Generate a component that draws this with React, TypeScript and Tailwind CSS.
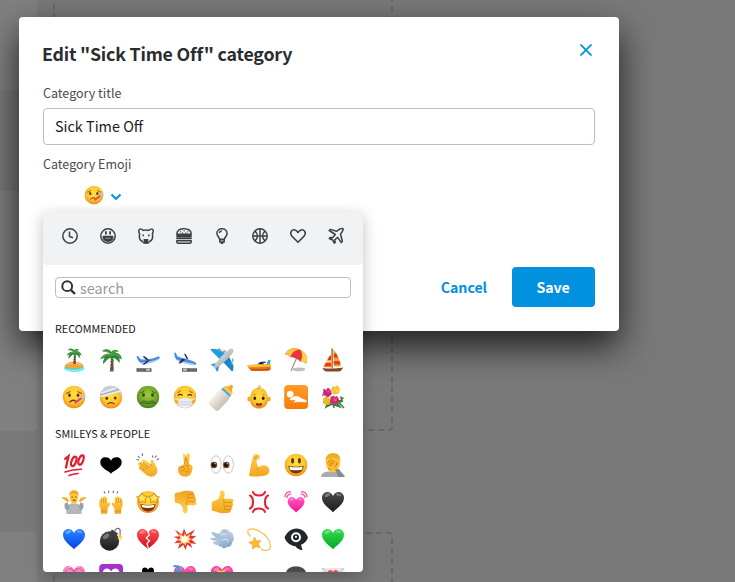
import React, { useState } from 'react';
import clsx from 'clsx';

const HEART = 'M12 22.3C9.8 19.4 1 14.6 1 7.8 1 4.5 3.4 2 6.4 2c2.4 0 4.400 1.300 5.600 3.900C13.200 3.300 15.200 2 17.600 2 20.600 2 23 4.500 23 7.800c0 6.800-8.800 11.600-11 14.500z';

// Shared gradients, referenced by every emoji below
const Gradients: React.FC = () => (
  <svg className="absolute w-0 h-0" aria-hidden="true">
    <defs>
      <radialGradient id="face" cx=".5" cy=".4" r=".6">
        <stop offset="0" stopColor="#ffe13f" />
        <stop offset=".65" stopColor="#fdc42e" />
        <stop offset="1" stopColor="#ee8b17" />
      </radialGradient>
      <radialGradient id="sick" cx=".5" cy=".4" r=".6">
        <stop offset="0" stopColor="#a3c83d" />
        <stop offset=".65" stopColor="#72a62b" />
        <stop offset="1" stopColor="#417c1d" />
      </radialGradient>
      <linearGradient id="skin" x2="0" y2="1">
        <stop offset="0" stopColor="#ffd34e" />
        <stop offset="1" stopColor="#f3a421" />
      </linearGradient>
      <linearGradient id="red" x2="0" y2="1">
        <stop offset="0" stopColor="#ff5353" />
        <stop offset="1" stopColor="#d20c1e" />
      </linearGradient>
      <linearGradient id="blue" x2="0" y2="1">
        <stop offset="0" stopColor="#2b86ff" />
        <stop offset="1" stopColor="#0643e8" />
      </linearGradient>
      <linearGradient id="green" x2="0" y2="1">
        <stop offset="0" stopColor="#35dc55" />
        <stop offset="1" stopColor="#04a51d" />
      </linearGradient>
      <linearGradient id="black" x2="0" y2="1">
        <stop offset="0" stopColor="#4b4b4e" />
        <stop offset="1" stopColor="#1b1b1d" />
      </linearGradient>
      <linearGradient id="pink" x2="0" y2="1">
        <stop offset="0" stopColor="#ff5dc0" />
        <stop offset="1" stopColor="#fb0d95" />
      </linearGradient>
      <linearGradient id="orange" x2="0" y2="1">
        <stop offset="0" stopColor="#ff9d2c" />
        <stop offset="1" stopColor="#f77a06" />
      </linearGradient>
      <linearGradient id="steel" x2="1" y2="1">
        <stop offset="0" stopColor="#f1f3f6" />
        <stop offset="1" stopColor="#8d949e" />
      </linearGradient>
      <linearGradient id="milk">
        <stop offset="0" stopColor="#f3efe8" />
        <stop offset="1" stopColor="#c9bfb1" />
      </linearGradient>
      <linearGradient id="cloud" x2="0" y2="1">
        <stop offset="0" stopColor="#c3d5e8" />
        <stop offset="1" stopColor="#8caac9" />
      </linearGradient>
    </defs>
  </svg>
);

const Heart: React.FC<{ fill: string }> = ({ fill }) => (
  <>
    <path d={HEART} fill={fill} />
    <ellipse cx="6.300" cy="5" rx="3" ry="1.600" fill="#fff" opacity=".3" transform="rotate(-25 6.300 5)" />
    <ellipse cx="17.500" cy="4.700" rx="3" ry="1.300" fill="#fff" opacity=".25" transform="rotate(15 17.500 4.700)" />
  </>
);

const Palm: React.FC = () => (
  <>
    <path d="M11.200 8.500c1.300 4.500 1 9.500-.600 15h4c.300-5.500-.100-10.500-1.700-15z" fill="#80553a" />
    <path d="M11.200 14h2.500M11 17h3M10.900 20h3.300" stroke="#51331f" strokeWidth=".8" />
    <path
      d="M12 6.500C9.500 5 4 5.500 1.200 11.500c2-1 3.500-1.500 4.500-1.200-1.500 1.400-2 3.600-1.300 6 1.500-2.500 3.600-5 7-6.800 1.200 1.200 2 3.600 2.300 6 1.600-1.500 1.300-3.700.300-5.800 2.700.600 5 2.700 6.300 5.300.800-1.800.500-3.400-.400-4.700 1.300.100 2.200.6 3 1.300C22.500 7 19.500 4.500 15.500 5.200 17 4 18.600 3.500 20 3.500 16.500 1 13.500 2 12.200 4 10.500 1 6 .200 3 3.200c3 0 6 .800 9 3.300z"
      fill="#2f8a35"
    />
    <path d="M4 3c3 0 6 1 8 3.500M3 9.500C6 7 9 6.500 12 7M21 8.500C18 6.500 15 6 12 7M18.500 3.500C15.500 3 14 4 12 6" stroke="#75b64c" strokeWidth=".8" fill="none" />
  </>
);

const Thumb: React.FC = () => (
  <>
    <path d="M1.700 13c0-1.500 1.700-2 4.300-2.800 2.300-.8 4-3.500 4.100-7C10.200 1 11 .500 12.200.600c2.400.200 3.200 3.300 1.800 8.200h7c3 0 3 3 1.300 3.700 1.400.900 1.100 3.200-.500 3.700 1 1.100.600 3-1 3.400.600 1.200 0 2.900-1.900 3.100-5 .800-9.500.700-12.600-1.300-2.500.200-4.300-.200-4.600-1.800z" fill="url(#skin)" />
    <path d="M15 12.400h7M15 16.200h6.600M15 19.600h5.700M14.500 9c-1.300 1-1.500 3 .200 3.600-1.400.9-1.100 3 .300 3.700-1.100.900-.8 2.700.400 3.300" stroke="#d78316" strokeWidth=".8" fill="none" />
  </>
);

const Baby: React.FC = () => (
  <>
    <ellipse cx="2" cy="14" rx="1.700" ry="2.500" fill="#f2a927" />
    <ellipse cx="22" cy="14" rx="1.700" ry="2.500" fill="#f2a927" />
    <path d="M12 2.800c5.600 0 8.900 4.700 8.900 11.400 0 5.500-3.500 9.300-8.900 9.300s-8.900-3.800-8.900-9.300C3.100 7.500 6.400 2.800 12 2.800z" fill="url(#face)" />
    <path d="M10 3.300c3 .2 3.800-.8 3.300-2.100-.4-1-2-.6-1.700.4" stroke="#b67a20" strokeWidth=".7" fill="none" />
    <ellipse cx="7.800" cy="13.300" rx="1.300" ry="1.700" fill="#2c1a10" />
    <ellipse cx="16.200" cy="13.300" rx="1.300" ry="1.700" fill="#2c1a10" />
    <path d="M5.800 10.200c1-.9 2.400-1 3.300-.5M18.200 10.200c-1-.9-2.400-1-3.300-.5" stroke="#b0721b" strokeWidth=".7" fill="none" />
    <path d="M8.800 18c2 .700 4.400.700 6.400 0-.3 2.500-1.400 3.400-3.200 3.400S9.100 20.500 8.800 18z" fill="#5f2512" />
    <path d="M10 20.200c1-.7 3-.7 4 0-.9 1.200-3.100 1.200-4 0z" fill="#ed5b65" />
  </>
);

const emojiArt: Record<string, React.ReactNode> = {
  island: (
    <>
      <ellipse cx="12.200" cy="20.300" rx="10.300" ry="3.500" fill="#35dcec" />
      <path d="M2.500 20.500c2 2.200 15 3.200 19.500-.8" stroke="#a8f7fa" fill="none" />
      <path d="M2.500 18.200C4 15 8 13.800 12 13.800s8.300 1.200 9.700 4.200c-1.700 3.400-17 3.700-19.200.2z" fill="#f0a33b" />
      <path d="M5 17c2-2 11-2.500 14 0" stroke="#ffd27a" fill="none" />
      <g transform="translate(3.700 -.3) scale(.69)"><Palm /></g>
    </>
  ),
  palm: <Palm />,
  departure: (
    <>
      <path d="M.5 20.300h15v3.400H.5z" fill="#53575e" />
      <path d="M1.500 22h7" stroke="#8c9198" strokeWidth=".7" />
      <path d="M10 20.800h4v2h-4z" fill="#c3c5c8" />
      <path d="M.6 8.200 2 8l2.800 3.300c5.500.8 11.500-.5 16.500-2.600 1.300-.4 2.500-.2 2.500.6 0 1.500-2.500 3.300-6 4.600-4.500 1.500-9.300 2.300-12.500 1.500C3.300 14.400 1.200 11.500.6 8.200z" fill="#4d8ae2" />
      <path d="M3.500 14.300c5.500.8 13-.8 19.500-3.800-1.200 1.700-4.200 3.300-8 4.200-4.500 1-9.500 1.500-11.500-.4z" fill="#b9d2f3" />
      <path d="m6.500 8.500 2-.3 4.500 3.300-2.500.5zM14.500 12l-3.500.5-4.500 4.300 1.800-.1z" fill="#22324f" />
    </>
  ),
  arrival: (
    <>
      <path d="M9 20.300h15v3.400H9z" fill="#53575e" />
      <path d="M16 22h7" stroke="#8c9198" strokeWidth=".7" />
      <path d="M10 20.800h4v2h-4z" fill="#c3c5c8" />
      <path d="M1.300 4.500 2.700 4.700 4.500 8.500c5.500 1.700 11 3 16 4.800 2 .9 3 2 2.800 2.900-.3 1.300-3.300.9-6.300.3-5-1.100-11-2.800-13.500-4.800C2 10 1.200 7 1.300 4.500z" fill="#4d8ae2" />
      <path d="M3 11.300c5 2 12.500 3.500 20 4.900-1.500 1.300-4.500.8-8 0-4.500-1.100-11-3-12-4.900z" fill="#b9d2f3" />
      <path d="m11 5.500 1.700.5 2.800 5.200-2.300-.7zM12.500 11.500l-3.500-.8-3.500 4.500 1.800.3z" fill="#22324f" />
    </>
  ),
  airplane: (
    <>
      <path d="M.5 2 1.500.8 6 .9 16.500 5.500 11 13.500 8.500 10z" fill="#1f9ddf" />
      <path d="m22 23.500 1.200-1 .3-4.500L18.500 7.500 11 13.500l3.500 2z" fill="#1787c8" />
      <path d="m.5 16.500 6-1.500 2.800 2.500-1.300 5.700-1.200.3-2-4.300z" fill="#1f9ddf" />
      <path d="M20 1c2-1.200 4.500.5 3.200 2.900C20.500 8.500 11.500 17.300 5.500 20.200c-1.300.3-2.200-.5-1.700-1.700C7.200 12 15.500 3.700 20 1z" fill="url(#steel)" />
      <path d="m7.500 2 1.800-1 2 2M12.500 3.700l2-1 1.500 1.600M22 10.500l1.200 1.500-1 2M20.500 16l2.200-1" stroke="#8d959e" strokeWidth="1.200" fill="none" />
    </>
  ),
  speedboat: (
    <>
      <path d="m19.500 17 1.300-4.500 2.900-.7-1 5.200z" fill="#25b5ad" />
      <path d="M10.300 17.500c.5-3 3-4.300 8-4l1.200 4z" fill="#2c4fae" />
      <path d="M11.500 16.700c.7-2 1.800-2.500 4-2.500v2.500z" fill="#101e44" />
      <path d="M16.500 15h2.700v2h-2z" fill="#e9eff8" />
      <path d="M.3 17.300c7-.8 16-1 23.400-.7v4.200c-.2 1.500-1.500 2.200-4 2.200H6C3 22.800 1.300 20 .3 17.300z" fill="#ea7315" />
      <path d="M.3 17.200c7-.8 16-1 23.400-.7v1.900c-8 .5-15 1.200-22.500.8z" fill="#ffbe35" />
      <path d="M3.500 21.800c5 .5 14 .2 19.500-.8" stroke="#a8400f" strokeWidth=".9" fill="none" />
    </>
  ),
  umbrella: (
    <>
      <ellipse cx="15" cy="21.300" rx="6.500" ry="1.900" fill="#c1bfbd" />
      <path d="M13.500 8 7 23" stroke="#8d8d8d" strokeWidth="1.100" />
      <g transform="rotate(24 12 9)">
        <path d="M1 11.500C1 5 5.500.700 12.500.700S24 5 24 11.500c-2-1.500-4-1.500-6 0-3-1.500-8-1.500-11 0-2-1.500-4-1.500-6 0z" fill="#e8343e" />
        <path d="M12.500.700C8.500 2.500 6.500 6.500 7 11.500c-2-1.500-4-1.500-6 0C1 5 5.500.700 12.500.700z" fill="#f6c636" />
        <path d="M12.500.700c4 1.500 6 6 5.500 10.800 2-1.500 4-1.500 6 0C24 5 19.500.700 12.500.700z" fill="#fbd642" />
      </g>
    </>
  ),
  sailboat: (
    <>
      <path d="M10.500.500h1.200v20h-1.200z" fill="#7a4a2a" />
      <path d="M12.500 1.500c3.500 4 6.500 10 7.200 17h-7z" fill="#f3a62c" />
      <path d="M12.700 5.500h2.600l2 4h-4.600zM12.700 13h5.900l1 3.400h-6.800z" fill="#e63a2d" />
      <path d="M10 5c-2 4-5 9.500-8 14.500h8.500z" fill="#ffd33c" />
      <path d="M8.500 8 6.200 12.200h4V8zM4.800 14.800 2.900 18.500h7.300v-3.700z" fill="#e7372c" />
      <path d="M1.500 20c5 .8 14 .7 20.500-.6-1 2.700-2.500 4-4.500 4H6c-2.300 0-3.500-1-4.500-3.400z" fill="#80472a" />
    </>
  ),
  thermometer: (
    <>
      <circle cx="12" cy="12" r="11.200" fill="url(#face)" />
      <path d="M4 8.500c1-.2 3-.8 4.200-2.200M20 8.500c-1-.2-3-.8-4.200-2.200" stroke="#935017" strokeWidth="1.100" fill="none" />
      <ellipse cx="7.500" cy="10.300" rx="1.300" ry="1.800" fill="#5a3014" />
      <ellipse cx="16" cy="10.300" rx="1.300" ry="1.800" fill="#5a3014" />
      <path d="M7.500 17.300c2-2.300 5-2.500 7.500-.5" stroke="#69330f" strokeWidth="1.200" fill="none" />
      <path d="m14 17.300 8.500-6.800" stroke="#c3cdea" strokeWidth="2.400" strokeLinecap="round" />
      <path d="m13.300 17.700 5.500-4.200" stroke="#e6395f" strokeWidth="2" strokeLinecap="round" />
      <path d="m19.300 11.500 1.200 1.500M21 10.200l1.200 1.500" stroke="#7a88a8" strokeWidth=".6" />
    </>
  ),
  bandage: (
    <>
      <circle cx="12" cy="12.300" r="11.200" fill="url(#face)" />
      <path d="M1 11.500C.700 5.500 5.500.700 12 .700c6 0 10.500 4 11.200 9.500L18 7 1 12z" fill="#c7cbd3" />
      <path d="M2.500 8 17 3M1.300 11.500 21.500 6" stroke="#eceef2" strokeWidth="1.500" />
      <path d="M1.600 10 20 4.500" stroke="#9399a5" strokeWidth=".7" />
      <ellipse cx="7.800" cy="13.300" rx="1.300" ry="1.600" fill="#5a3014" />
      <ellipse cx="16.200" cy="13" rx="1.300" ry="1.600" fill="#5a3014" />
      <path d="M8.500 19c2-1.600 5-1.600 7 0" stroke="#69330f" strokeWidth="1.100" fill="none" />
    </>
  ),
  nauseated: (
    <>
      <circle cx="12" cy="12" r="11.200" fill="url(#sick)" />
      <path d="M4.500 7.800C6 7.800 7.500 7 8.300 5.500M19.500 7.800c-1.500 0-3-.8-3.800-2.300" stroke="#2e5d16" strokeWidth="1" fill="none" />
      <ellipse cx="7.500" cy="10" rx="1.300" ry="1.700" fill="#23420f" />
      <ellipse cx="16.500" cy="10" rx="1.300" ry="1.700" fill="#23420f" />
      <path d="M5.500 18.300c.8-3.300 3-2.300 4.500-1.700 1.500.6 2.500.6 4 0s3.700-1.600 4.500 1.700M5.500 18.300c1.500-1 3-.5 4.500 0s2.500.5 4 0 3-1 4.500 0" stroke="#31631a" strokeWidth="1" fill="none" />
    </>
  ),
  mask: (
    <>
      <circle cx="12" cy="12" r="11.200" fill="url(#face)" />
      <path d="M4.500 7.500C6 7.300 7.300 6.600 8 5.500M19.500 7.500c-1.500-.2-2.800-.9-3.500-2" stroke="#935017" strokeWidth=".9" fill="none" />
      <path d="M5 10.500c1.300-1.300 3.200-1.300 4.500 0M14.500 10.500c1.300-1.300 3.200-1.300 4.500 0" stroke="#5a3014" strokeWidth="1.200" fill="none" />
      <path d="M1.200 13.500 6 15M22.800 13.500 18 15M3 19l4 1M21 19l-4 1" stroke="#e6ebf2" strokeWidth="1.200" />
      <path d="M5.500 14.300 12 12.800l6.500 1.500c.5 3 .2 5.500-1 7.700-3 1.500-8 1.500-11 0-1.200-2.200-1.500-4.700-1-7.700z" fill="#e9ecf4" />
      <path d="M6 17h12M6.200 19.600h11.600" stroke="#c3cbd8" strokeWidth=".8" />
    </>
  ),
  bottle: (
    <g transform="rotate(42 12 12)">
      <path d="M10.300-2.500c0-1.500 3.400-1.500 3.400 0 0 2.500 1.500 3 3.300 4.500H7c1.800-1.500 3.300-2 3.300-4.500z" fill="#f7a52a" />
      <path d="M6.500 2h11v2.500h-11z" fill="#ffc53d" />
      <path d="M6.600 4.500h10.800l.7 2.400H5.900z" fill="#56a6d0" />
      <path d="M6 6.900h12l.8 3-.3 13.500c-.1 2-1.300 3-3 3h-7c-1.700 0-2.900-1-3-3L5.200 9.900z" fill="url(#milk)" />
    </g>
  ),
  baby: <Baby />,
  babySymbol: (
    <>
      <rect x=".2" y="0" width="23.800" height="24" rx="4" fill="url(#orange)" />
      <circle cx="6.200" cy="9.200" r="3.300" fill="#fff" />
      <path d="M9.500 12c2-1.300 5.300-.8 7.500 1.200l5 2.200c1 .5.700 1.700-.4 1.600L17 16.700l-5.500.3-1.700.2 2-1.700-1.500-.8-3.300.3c-1.200-.1-1.200-1.500 0-1.700z" fill="#fff" stroke="#fff" strokeWidth=".5" />
    </>
  ),
  bouquet: (
    <>
      <path d="m12 11 11 12M10 12l3 11M7 17l7-2 8 1-6 2 3 4-8-3-6 3 2-4-5-1z" stroke="#388135" strokeWidth="1.500" fill="#4f9e3c" />
      <path d="M2 12 .8 9 4 10l-1-3zM19 11l4 2-3 3z" fill="#397f32" />
      <path d="M2.500 3.500 5 5l2-2.500L9.500 5 11 9l-4 3.500-5-3z" fill="#d51e83" />
      <path d="m11.500 1 3 1 2-2 2.500 4-1.500 5-5 .5-2.500-4z" fill="#f6c631" />
      <path d="m2.500 13 3-1.500L9.500 14l-1 5.500-4.500.5-2-3.500z" fill="#eeb62a" />
      <path d="m10.500 11 3 1 2.500-1 2 3-1.500 5-5 .5L9 16z" fill="#db267d" />
      <path d="m5 5 2 2.500L8.500 5M14.500 4l1 3 1.500-3M13 13l1 3 1.500-3" stroke="#fff" strokeWidth=".7" opacity=".4" fill="none" />
    </>
  ),
  hundred: (
    <g stroke="#e51c2e" fill="none" strokeLinecap="round">
      <path d="M3.200 5.800 6.500 3.200 4 14.500" strokeWidth="2.300" />
      <ellipse cx="11.800" cy="8.300" rx="2.200" ry="4.900" strokeWidth="2.200" transform="rotate(20 11.800 8.300)" />
      <ellipse cx="19" cy="7" rx="2.200" ry="4.900" strokeWidth="2.200" transform="rotate(20 19 7)" />
      <path d="M3 19c5-1.700 10-2.500 16.500-2.700M7 22.500c3-1.200 6-1.700 9-1.900" strokeWidth="1.500" />
    </g>
  ),
  heartSuit: <path d="M12 20.700C10 17.900 1.300 15.500 1.300 9.300c0-3 2.100-5 5-5 2.800 0 4.900 1 5.700 3.500.8-2.500 2.900-3.500 5.700-3.500 2.900 0 5 2 5 5C22.700 15.500 14 17.900 12 20.700z" fill="#000" />,
  clap: (
    <>
      <path d="m2 3 1.500 1.800M6 .5l.7 2.300M.5 6.500 3 7M17 2.500l-.5 2M20.500 2.500 19 4.700M23 5.500l-2.300 1.200" stroke="#6c6c6c" strokeWidth="1.100" />
      <path d="M3.500 9.500c1-1.300 2.300-1 3.500.2L6 7.500c.7-1.500 2.200-1.300 3.300-.2l5.500 4-.3-3.300c.3-1.800 2.400-1.500 3 0l3.600 7.500c1 3.800-.5 6.500-3.500 7.700-3.600 1.300-6.500-.2-9-2.600L3 15.800c-1-1.200-.1-2.600 1-2.200L2.500 12c-.6-1.200.2-2.300 1-2.500z" fill="url(#skin)" />
      <path d="m4 13.600 4.600 4M4 10l7 6M7 9.700l6.500 5.500M14.800 11.300l1.400 2" stroke="#d78316" strokeWidth=".8" fill="none" />
    </>
  ),
  crossed: (
    <>
      <path d="M10 1.300c1.700-.7 2.600.5 2.900 2.500L13.500.9C14.500-.4 17 .2 16.800 2.200L16 11l1.500.5c2.300.8 2.500 3.500 1.700 5.500-1 4.500-2.700 6.700-6.700 6.700-4.500 0-7.500-2.500-7.500-6.900 0-2.500 1-3.800 4.500-4.500l1.500-1z" fill="url(#skin)" />
      <path d="m12.900 3.800-1.700 7.500M12.900 4l1.800 7.500M6 15.500c3-2.500 6.500-3 10-3M8 15c3.500-1 5 .5 3.500 2l-4 1M15.500 12.500c-1 1.500-.6 3.500.5 4.700M12 18c1.500 1 3 1 4.500.2" stroke="#d78316" strokeWidth=".8" fill="none" />
    </>
  ),
  eyes: (
    <>
      <ellipse cx="6" cy="11.500" rx="5.100" ry="8.700" fill="#fff" stroke="#b4b6b9" strokeWidth=".8" />
      <ellipse cx="18.300" cy="11.500" rx="5.100" ry="8.700" fill="#fff" stroke="#b4b6b9" strokeWidth=".8" />
      <circle cx="4" cy="12" r="3.200" fill="#70411f" />
      <circle cx="16.300" cy="12" r="3.200" fill="#70411f" />
      <circle cx="3.800" cy="12" r="2" fill="#1d120c" />
      <circle cx="16" cy="12" r="2" fill="#1d120c" />
      <circle cx="5" cy="10.700" r=".6" fill="#fff" />
      <circle cx="17.200" cy="10.700" r=".6" fill="#fff" />
    </>
  ),
  biceps: (
    <>
      <path d="M6.500 2.500c.7-2 3.500-2 5.200-.7 1.500 1.200 1.500 3.200.3 4.400l-2.500.6c0 3 .8 5.300 2.100 7.700 2.900-3.200 7.800-3 9.900.2 2 3.200.4 6.800-3 7.800-4.500 1.200-9.500 1.200-15 .7-1-.1-1.600-.7-1.300-1.700C3.700 15.500 4 8.500 6.500 2.500z" fill="url(#skin)" />
      <path d="M8.300 4.300c1.500.2 2.500-.5 2.300-1.800M7 3.500c.2 1 .6 1.800 2.500 3.300M11.600 14.500c-1 .9-1.300 2-1.300 3.200" stroke="#d78316" strokeWidth=".9" fill="none" />
    </>
  ),
  grin: (
    <>
      <circle cx="12" cy="12" r="11.200" fill="url(#face)" />
      <ellipse cx="8.600" cy="7.800" rx="1.500" ry="2.800" fill="#5a3014" />
      <ellipse cx="15.400" cy="7.800" rx="1.500" ry="2.800" fill="#5a3014" />
      <path d="M4.300 13c5 1 10.400 1 15.400 0-.3 4.500-3.400 7.500-7.700 7.500S4.600 17.500 4.300 13z" fill="#6f3613" />
      <path d="M5.300 13.800c4.500.7 9 .7 13.400 0l-.7 2.900c-4 .8-8 .8-12 0z" fill="#fff" />
    </>
  ),
  facepalm: (
    <>
      <path d="M0 24c.3-3.500 3-5.200 7.500-5.500h8c5 .5 8 2.500 8.400 5.500z" fill="#a8abb0" />
      <path d="M4.700 7.500C4.700 2.800 7.500.200 12 .200s7.300 2.500 7.300 7.300c0 6-2.500 11.800-7 11.800-5 0-7.600-5.800-7.600-11.800z" fill="#ffc735" />
      <path d="M4.800 7.500c1.700-3.500 11.700-4 14.500 0 .200-4.500-2.800-7.300-7.300-7.300S4.600 3 4.800 7.500z" fill="#f0ab25" />
      <path d="M6 9.500c1-1 3.500-3.500 4.700-4 1-.2 1.500.5.800 1.300 1.300-1 2.700-1 2.500.2 1.500-.7 2.300 0 2 1.200 1.300-.5 2 0 1.800 1.500-.3 2.500-.8 5-2.800 6.800l-4.500-.500C7.500 15 6 13 6 9.500z" fill="#ffb930" />
      <path d="m6.500 9.500 4.500-3.500M7.500 12l5-4.500M8.800 13.500l5-5M16 9.500c-.300 2-1 3.500-2 4.500M7 15.500c1 .9 2 1.400 3.500 1.500" stroke="#b9690f" strokeWidth=".8" fill="none" />
      <path d="m14 16.500 4-.5 5.500 8h-6z" fill="#84888f" />
    </>
  ),
  shrug: (
    <>
      <path d="M4.500 24C4 18 6 14.500 9 13.500h6c3 1 5 4.500 4.500 10.500z" fill="#b3b6bb" />
      <path d="M5.500 21C2.500 19 2 16.500 3 13l2.500-.3 2 4zM18.500 21c3-2 3.500-4.500 2.500-8l-2.500-.3-2 4z" fill="#9da1a7" />
      <path d="M5.700 13C5.300 11 3 10 1 9L0 8l.2-1 4.800.8 2 2.700zM18.300 13c.4-2 2.700-3 4.700-4l1-1-.2-1-4.800.8-2 2.700z" fill="#f3ac2b" />
      <path d="M7.700 5C7.700 2 9.500.500 12 .500S16.500 2 16.300 5c0 5-1.300 8.700-4.300 8.700S7.700 10 7.700 5z" fill="#ffc735" />
      <path d="M7.500 5.800C7 2 9 .5 12 .5s5 1.500 4.500 5.300l-1.200-2-6.300-.3z" fill="#eba822" />
      <path d="M9.500 7h1.500M13 7h1.500M10.700 10.500c1-.7 2-.7 3 0" stroke="#633914" strokeWidth=".8" />
    </>
  ),
  raising: (
    <>
      <path d="m5 1.200 1 2.200M9.500.7l.5 2.500M14.500.7l-.4 2.500M19 1.200l-1.200 2.200" stroke="#747474" strokeWidth="1.100" />
      <path d="M2.500 8.200c.2-1.500 1.500-1.500 1.700 0l.3-1.500c.3-1.200 1.500-1.200 1.700 0l.2 1.300c.4-1.400 1.700-1.200 1.800 0l.3 5.500 1.500-.7c1.400-.2 1.600 1 1 2L8.700 18l-.4 5.800H2L1.500 18C-.3 16 .2 12 .7 9.700c.3-1.200 1.500-1 1.800-1.500z" fill="url(#skin)" />
      <path d="M21.500 8.200c-.2-1.500-1.500-1.500-1.700 0l-.3-1.500c-.3-1.200-1.500-1.200-1.700 0l-.2 1.300c-.4-1.400-1.700-1.200-1.800 0l-.3 5.500-1.500-.7c-1.400-.2-1.600 1-1 2l2.300 3.200.4 5.800H22l.5-5.800c1.800-2 1.300-6 .8-8.300-.3-1.200-1.500-1-1.800-1.500z" fill="url(#skin)" />
      <path d="M2.500 8.500V13M4.500 8v5M6.400 8v5M21.500 8.500V13M19.500 8v5M17.600 8v5M2 21h6M16 21h6" stroke="#d78316" strokeWidth=".6" />
    </>
  ),
  starStruck: (
    <>
      <circle cx="12" cy="12" r="11" fill="url(#face)" />
      <path d="m6.200 2.800 1.700 3 3.500.7-2.300 2.600.4 3.500-3.300-1.300-3.100 1.600.1-3.600L.5 7l3.600-.9z" fill="#ffe353" stroke="#c36a12" strokeWidth=".7" />
      <path d="m17.800 2.800-1.700 3-3.500.7 2.300 2.600-.4 3.500 3.300-1.300 3.100 1.600-.1-3.600L23.500 7l-3.600-.9z" fill="#ffe353" stroke="#c36a12" strokeWidth=".7" />
      <path d="M4.500 14c5 1.300 10 1.300 15 0-.3 4.500-3.300 7.500-7.500 7.500S4.800 18.500 4.500 14z" fill="#7b2f11" />
      <path d="M5.500 14.800c4.500 1 8.500 1 13 0l-.7 2.500c-4 .8-7.600.8-11.600 0z" fill="#fff" />
    </>
  ),
  thumbsDown: <g transform="matrix(1 0 0 -1 0 24)"><Thumb /></g>,
  thumbsUp: <Thumb />,
  anger: (
    <g stroke="#e81e31" strokeWidth="2.100" fill="none" strokeLinecap="round">
      <path d="M6 2c1.500 4.700 10.500 4.700 12 0M6 22c1.500-4.700 10.500-4.700 12 0M3 5.500c4 2 4 11 0 13M21 5.500c-4 2-4 11 0 13" />
    </g>
  ),
  heartbeat: (
    <>
      <g transform="translate(3 5.500) scale(.76)"><Heart fill="url(#pink)" /></g>
      <path d="M1 7C1 3.500 3.500 1.500 7 1.700M3 8c0-2 1.500-3.700 4-4M23 7c0-3.500-2.500-5.500-6-5.300M21 8c0-2-1.500-3.700-4-4" stroke="#fb62b5" strokeWidth="1.500" fill="none" />
    </>
  ),
  blackHeart: <Heart fill="url(#black)" />,
  blueHeart: <Heart fill="url(#blue)" />,
  bomb: (
    <>
      <circle cx="10.500" cy="14" r="9.700" fill="url(#black)" />
      <path d="m13 2.500 6 4-2.500 4-6.500-4z" fill="#3b3e43" />
      <ellipse cx="7" cy="9.500" rx="3.500" ry="2" fill="#fff" opacity=".3" transform="rotate(-35 7 9.500)" />
      <path d="M15.500 4.500c1-3.500 4.500-4.200 5.500-1.700.5 1.500-.5 4.200.5 7" stroke="#727272" strokeWidth="1.200" fill="none" />
      <path d="m21 7 1 2 1.700.8-1.500 1.300-.2 2-1.600-1.300-2 .2 1-2-.6-1.700 1.700.2z" fill="#ffd42f" />
    </>
  ),
  brokenHeart: (
    <>
      <Heart fill="url(#red)" />
      <path d="m11.800 4 1.500 4-3 3 3.200 2.700-2.500 3 1.500 5.500" stroke="#fff" strokeWidth="1.200" fill="none" />
    </>
  ),
  collision: (
    <>
      <path d="M2 2.700 9 7.500l2-6 2.500 6 8.500-5-4 6.300 5.300.2-4.800 3.500 4.800 4.500-6-.7 2.200 5-5.200-3.700-1.800 5.400-2.200-5-5.300 4 1.800-6.300-5.600.600 4.300-4L.8 9.700l5.500-.5z" fill="#e5332f" />
      <path d="m5.500 6 4.800 3.500 1.200-3.500 1.700 3.300 4.800-2.800-2.200 3.700 3.200 2.300-3.200.7 1.700 3.800-3.700-2-1.300 4-2-3.500-3.700 2.200 1.200-3.700-3.500-.5 2.700-2z" fill="#ffc46a" />
      <path d="m8 8 3 2 1-2.500 1 2.500 3-1-1.300 2.700 2 1.700-2.500-.100.300 2.600-2.300-1.500-1.500 2.500-.700-2.500-2.500.5 1.300-2-2-1 2-1z" fill="#fffbe8" />
    </>
  ),
  dash: (
    <>
      <path d="M10 6.500c0-3 2.500-5 5-4.500 2.500-.5 4.500 1 4.500 3 2.500 0 4 2 3.700 4.200 1.300 2 .8 4.600-1 5.800.3 3-2.500 5.500-5.200 5-2 2-5 1.500-5.500-.5-2 .5-3.500-.7-3.500-2.500l2-2.500z" fill="url(#cloud)" />
      <path d="M1.500 5c3-.5 4 2 8.500 1.500l2 4-1.500 6C7.500 19 4 18 2.500 14.800c2 .4 3.500 0 4.500-1.300-3 .5-6-.2-7-2.700 2.300.7 4.500.500 6-.6C3.500 9.500 1.700 7.700 1.500 5z" fill="#a9c1da" />
      <path d="M11 9c.8-2.500 4-2.800 5-1M12 14c1-2.500 5.500-2.500 6.500.5" stroke="#e5f1fb" strokeWidth="1" fill="none" />
      <path d="M17 18.500c2-.5 3.300-1.900 3.500-3.700M13 5c1-.8 2.500-.8 3.500 0" stroke="#7896b6" strokeWidth=".8" fill="none" />
    </>
  ),
  dizzy: (
    <>
      <path d="M.7 4C2-2 22 5 23.500 19M.7 4c0 2.500 1 4 3 5.500" stroke="#f4bf42" strokeWidth="1.100" fill="none" />
      <path d="M14 22c4 2.500 9.500 2 9.500-3" stroke="#f4bf37" strokeWidth="1.100" fill="none" />
      <path d="m7.500 10.200 2 3.700 4.300-.3-2.500 3.300 2 4-4.200-1.400-3.500 2.500.1-4.200-4-2.500 4.300-.9z" fill="#fbbb28" stroke="#e99a1c" strokeWidth=".6" />
    </>
  ),
  eyeBubble: (
    <>
      <path d="M.5 10.500C3 5 7 1.500 12.500 1.500S22 5 24 10.500c-1.500 4-4 6-7 7.200l1.500 5.500c-3.500-.5-5.700-2-7-4C6 18.800 2.500 15.500.5 10.500z" fill="#23252b" />
      <circle cx="12" cy="10.300" r="5" fill="#fff" />
      <circle cx="12" cy="10.300" r="3" fill="#23252b" />
      <circle cx="12" cy="9.800" r="1.100" fill="#fff" />
    </>
  ),
  greenHeart: <Heart fill="url(#green)" />,
  growingHeart: (
    <>
      <Heart fill="#f984c1" />
      <g transform="translate(2.500 3) scale(.8)"><path d={HEART} fill="none" stroke="#e655a0" strokeWidth="1.500" /></g>
    </>
  ),
  heartDecoration: (
    <>
      <rect x=".2" y="0" width="23.800" height="24" rx="4" fill="#a72fd0" />
      <g transform="translate(3 3) scale(.76)"><path d={HEART} fill="#fff" /></g>
    </>
  ),
  exclamation: <path d="M12 14C9.500 11 6 9 6 6.500c0-3.500 4.500-4 6-.8 1.500-3.200 6-2.700 6 .8 0 2.500-3.500 4.500-6 7.500z" fill="#000" />,
  cupid: (
    <>
      <Heart fill="#f14ca2" />
      <path d="m.5 2 5 .5 1.500 4.500-3-.5L10 13" stroke="#3b9bd9" strokeWidth="2" fill="none" />
    </>
  ),
  ribbonHeart: (
    <>
      <Heart fill="#f63fa4" />
      <path d="m7 6.500 4 1.700 5-2.200" stroke="#ffd52e" strokeWidth="1.800" fill="none" />
    </>
  ),
  hole: <ellipse cx="12" cy="9" rx="10" ry="6.700" fill="#4a4a4c" />,
  letter: (
    <>
      <rect x=".5" y="4" width="23" height="17" rx="1" fill="#e5e6e8" />
      <path d="m1 4 11 9L23 4" stroke="#babdc0" fill="none" />
      <g transform="translate(6 5) scale(.5)"><path d={HEART} fill="url(#red)" /></g>
    </>
  ),
};

const recommended = [
  'island', 'palm', 'departure', 'arrival', 'airplane', 'speedboat', 'umbrella', 'sailboat',
  'thermometer', 'bandage', 'nauseated', 'mask', 'bottle', 'baby', 'babySymbol', 'bouquet',
];

const smileys = [
  'hundred', 'heartSuit', 'clap', 'crossed', 'eyes', 'biceps', 'grin', 'facepalm',
  'shrug', 'raising', 'starStruck', 'thumbsDown', 'thumbsUp', 'anger', 'heartbeat', 'blackHeart',
  'blueHeart', 'bomb', 'brokenHeart', 'collision', 'dash', 'dizzy', 'eyeBubble', 'greenHeart',
  'growingHeart', 'heartDecoration', 'exclamation', 'cupid', 'ribbonHeart', '', 'hole', 'letter',
];

const tabs: { id: string; icon: React.ReactNode }[] = [
  { id: 'recent', icon: <><circle cx="8" cy="8" r="7.200" /><path d="M7.500 3.500v5l3.500 1.300" /></> },
  {
    id: 'people',
    icon: (
      <>
        <circle cx="8" cy="8" r="7.200" />
        <path d="M5.900 3.300v3.200M10.100 3.300v3.200" strokeWidth="1.800" />
        <path d="M3.300 8.500h9.400c0 3-1.900 4.700-4.700 4.700S3.300 11.500 3.300 8.500z" fill="#3d3f42" />
        <path d="M5.500 10.300h5" stroke="#a9abae" strokeWidth=".8" />
      </>
    ),
  },
  {
    id: 'nature',
    icon: (
      <>
        <path d="M1.600 5.800C-.2 3.200 1 .800 2.700 1c1.300.1 2 .7 2.600 1.400 1.600-.6 3.800-.6 5.400 0C11.300 1.700 12 1.100 13.300 1 15 .8 16.200 3.200 14.400 5.800c.8 4-.1 6.500-2.800 7.700L10 15H6l-1.600-1.500C1.700 12.300.8 9.800 1.600 5.800z" />
        <path d="M5.200 6.500v1.800M10.800 6.500v1.800" />
        <path d="M6.200 11.800h3.600L8.900 14.700H7.100z" fill="#3d3f42" />
      </>
    ),
  },
  {
    id: 'foods',
    icon: (
      <>
        <path d="M.8 6.200C.8 2.500 3.500.8 8 .8s7.200 1.700 7.200 5.400z" />
        <path d="M4 3.700h.8M7.700 3h.8M11.300 3.700h.8M6 4.900h.8M9.500 4.900h.8" strokeWidth="1.500" />
        <path d="M.3 8h15.400M.3 10.200h15.400" strokeWidth="1.900" />
        <path d="M.8 12.700h14.400v1c0 1-.5 1.500-1.500 1.500H2.300c-1 0-1.500-.5-1.500-1.500z" />
      </>
    ),
  },
  {
    id: 'objects',
    icon: (
      <>
        <path d="M5.700 11.500C5.500 9.300 2.900 8.300 2.900 5.300 2.900 2.500 5.200.7 8 .7s5.100 1.800 5.100 4.600c0 3-2.600 4-2.800 6.200z" />
        <path d="M5.500 5c.1-1.200 1-2 2.300-2M5.800 11.500h4.400v2.600H5.800zM6.700 15.300h2.600" />
      </>
    ),
  },
  {
    id: 'activity',
    icon: (
      <>
        <circle cx="8" cy="8" r="7.200" />
        <path d="M8 .8v14.400M.8 8h14.400M3 3c3.200 3 3.200 7 0 10M13 3c-3.200 3-3.200 7 0 10" />
      </>
    ),
  },
  { id: 'symbols', icon: <path d="M8 14.300 1.900 8.100C-1 4.700 2 1.200 5 2c1.400.3 2.300 1.400 3 2.500C8.700 3.400 9.600 2.300 11 2c3-.8 6 2.700 3.100 6.100z" /> },
  {
    id: 'places',
    icon: <path d="M1.200 2.500 2.400 1.400 8.500 3.300 11.600 1.200C13.200.3 15.700.2 15.200 1.600 14.800 3 14 4.200 12.500 6l1.900 7.300-1.100 1.300-3.600-5.300-3 2.700.5 2.300-1 .8-1.600-3.100-3.300-1.500.8-1 2.500.3 2.700-3.300z" />,
  },
];

const Emoji: React.FC<{ name: string; className?: string }> = ({ name, className }) => (
  <svg viewBox="0 0 24 24" className={clsx('overflow-visible', className ?? 'w-6 h-6')}>
    {emojiArt[name]}
  </svg>
);

const EmojiSection: React.FC<{ title: string; emojis: string[] }> = ({ title, emojis }) => (
  <section>
    <h3 className="h-[31px] pt-[10px] pl-3 text-[10.800px] leading-[16px] text-[#17181a]">{title}</h3>
    <div className="grid grid-cols-[repeat(8,37px)] auto-rows-[37px] pl-3">
      {emojis.map((name, i) => (
        <button key={i} className="flex items-center justify-center">
          {name && <Emoji name={name} />}
        </button>
      ))}
    </div>
  </section>
);

const EmojiPicker: React.FC = () => (
  <div className="absolute left-6 top-[194px] w-80 h-[361px] flex flex-col rounded bg-white overflow-hidden shadow-[0_5px_15px_rgba(0,0,0,0.25)]">
    <div className="h-[54px] shrink-0 px-2 pt-[17px] flex rounded-b bg-[#f1f2f4]">
      {tabs.map(tab => (
        <button key={tab.id} className="flex-1 h-4 flex justify-center">
          <svg viewBox="0 0 16 16" className="w-4 h-4 overflow-visible" fill="none" stroke="#3d3f42" strokeWidth="1.500" strokeLinejoin="round">
            {tab.icon}
          </svg>
        </button>
      ))}
    </div>
    <div className="mx-3 mt-3 h-[21px] shrink-0 flex items-center rounded border border-[#bdbdbd] pl-[5px]">
      <svg viewBox="0 0 15 15" className="w-[15px] h-[15px]" fill="none" stroke="#333" strokeWidth="2">
        <circle cx="6.200" cy="6.200" r="4.900" />
        <path d="m9.800 9.800 4.200 4.200" strokeWidth="2.400" />
      </svg>
      <input
        placeholder="search"
        className="ml-[4px] w-60 h-[19px] pt-px text-[14.400px] placeholder:text-[#999] outline-none"
      />
    </div>
    <div className="mt-[12px] min-h-0 overflow-hidden">
      <EmojiSection title="RECOMMENDED" emojis={recommended} />
      <EmojiSection title="SMILEYS &amp; PEOPLE" emojis={smileys} />
    </div>
  </div>
);

const Backdrop: React.FC = () => (
  <div className="absolute inset-0 flex gap-4">
    <div className="-mt-[150px] flex flex-col gap-[101px]">
      {[0, 1, 2].map(i => (
        <div key={i} className="w-[37px] h-[240px] shrink-0 rounded-r bg-[#808080]" />
      ))}
    </div>
    <div className="-mt-[150px] flex flex-col gap-[101px]">
      {[0, 1, 2].map(i => (
        <div key={i} className="w-[340px] h-[240px] shrink-0 rounded border-2 border-dashed border-[#65686e]" />
      ))}
    </div>
  </div>
);

const App: React.FC = () => {
  const [title, setTitle] = useState('Sick Time Off');

  return (
    <div className="relative w-[735px] h-[582px] overflow-hidden bg-[#797979] font-['Noto_Sans_CJK_SC',sans-serif]">
      <Gradients />
      <Backdrop />
      <div className="relative ml-[19px] mt-[17px] w-[600px] h-[314px] px-6 flex flex-col rounded bg-white shadow-[0_15px_35px_rgba(0,0,0,0.75)]">
        <div className="mt-[21px] h-[30px] flex items-center justify-between">
          <h2 className="text-[17.800px] tracking-[-0.2px] -ml-px font-bold leading-[30px] text-[#2b2c2f]">Edit "Sick Time Off" category</h2>
          <button className="mr-[3px] -mt-[6px]">
            <svg viewBox="0 0 12 12" className="w-3 h-3" stroke="#0291df" strokeWidth="1.800">
              <path d="m.5.500 11 11M11.500.500l-11 11" />
            </svg>
          </button>
        </div>
        <label className="mt-[15px] h-5 text-[12.500px] leading-5 text-[#4b4b4b]">Category title</label>
        <input
          value={title}
          onChange={e => setTitle(e.target.value)}
          className="mt-[5px] h-[37px] shrink-0 pl-[11px] pr-3 pb-[2px] rounded border border-[#bdbdbd] text-[14.400px] text-[#1c1c1c] outline-none"
        />
        <label className="mt-[9px] h-5 text-[12.500px] leading-5 text-[#4b4b4b]">Category Emoji</label>
        <button className="mt-[11px] ml-[41px] h-[20px] flex items-center gap-[7px]">
          <Emoji name="thermometer" className="w-5 h-5" />
          <svg viewBox="0 0 10 6" className="w-[10px] h-[6px] mt-[4px] overflow-visible" fill="none" stroke="#0291df" strokeWidth="2">
            <path d="m.5.500 4.500 4.300L9.500.5" />
          </svg>
        </button>
        <div className="mt-auto mb-6 flex justify-end items-center">
          <button className="mr-[25px] pt-[2px] text-[14.200px] tracking-[-0.05px] font-bold text-[#0291df]">Cancel</button>
          <button className="w-[83px] h-10 pt-[2px] pr-px rounded bg-[#0291df] text-[14.200px] tracking-[-0.1px] font-bold text-white">Save</button>
        </div>
        <EmojiPicker />
      </div>
    </div>
  );
};

export default App;
